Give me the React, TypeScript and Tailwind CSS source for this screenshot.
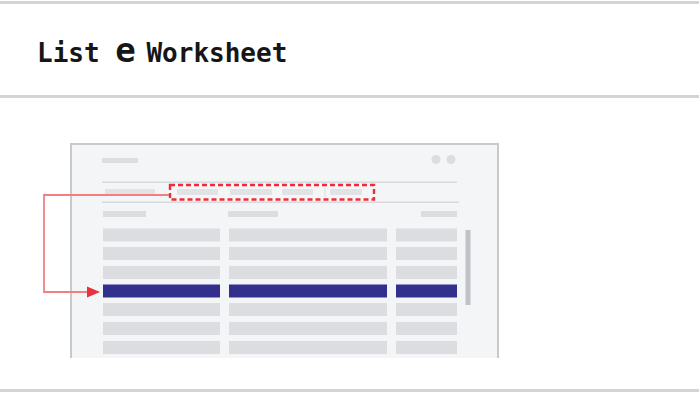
import React from "react";

const ROWS = [228.5, 247, 266, 284.5, 303, 322, 341];

function Illustration() {
  const gray = "#dcdde1";
  return (
    <svg
      width={460}
      height={216}
      viewBox="40 142 460 216"
      className="block"
      style={{ filter: "blur(0.35px)" }}
    >
      <rect x={71} y={144} width={427} height={240} fill="#f4f5f7" stroke="#c9c9cb" strokeWidth={2} />
      {/* title bar */}
      <rect x={102} y={158} width={36} height={5} fill={gray} />
      <circle cx={436} cy={159.5} r={4.5} fill={gray} />
      <circle cx={451} cy={159.5} r={4.5} fill={gray} />
      {/* tab lines */}
      <rect x={102} y={181.5} width={355} height={1.5} fill="#d8d9dc" />
      <rect x={102} y={201.5} width={357} height={1.5} fill="#d8d9dc" />
      {/* tabs */}
      <rect x={105} y={189} width={50} height={5} fill="#e2e3e6" />
      <rect x={177} y={189} width={41} height={6} fill="#e2e3e6" />
      <rect x={230} y={189} width={42} height={6} fill="#e2e3e6" />
      <rect x={282} y={189} width={31} height={6} fill="#e2e3e6" />
      <rect x={324.5} y={188} width={1} height={9} fill="#dcdde0" />
      <rect x={330} y={189} width={32} height={6} fill="#e2e3e6" />
      {/* dashed highlight */}
      <rect
        x={170}
        y={185}
        width={204}
        height={14.5}
        fill="none"
        stroke="#ea2f3a"
        strokeWidth={2.4}
        strokeDasharray="5 3"
      />
      {/* column headers */}
      <rect x={103} y={211} width={43} height={6} fill={gray} />
      <rect x={228} y={211} width={50} height={6} fill={gray} />
      <rect x={421} y={211} width={36} height={6} fill={gray} />
      {/* rows */}
      {ROWS.map((y, i) => {
        const c = i === 3 ? "#33308d" : gray;
        return (
          <g key={i}>
            <rect x={103} y={y} width={117} height={13} fill={c} />
            <rect x={229} y={y} width={158} height={13} fill={c} />
            <rect x={396} y={y} width={61} height={13} fill={c} />
          </g>
        );
      })}
      {/* scrollbar */}
      <rect x={465.5} y={230} width={5} height={75} fill="#bfc2c7" />
      {/* arrow */}
      <polyline
        points="169,195 44,195 44,292 90,292"
        fill="none"
        stroke="#f27f7f"
        strokeWidth={1.8}
      />
      <polygon points="87,286.5 100,292 87,297.5" fill="#e8323c" />
    </svg>
  );
}

export default function App() {
  return (
    <div className="w-[699px] h-[405px] bg-white pt-px">
      <div className="border-t-[3px] border-b-[3px] border-[#d4d4d4] h-[97px] flex items-center pl-[37px]">
        <h1
          className="text-[26px] font-bold text-[#161616] leading-none"
          style={{ fontFamily: '"DejaVu Sans Mono", "Liberation Mono", monospace' }}
        >
          List <span className="text-[34px] tracking-[-5px]">e</span> Worksheet
        </h1>
      </div>
      <div className="pt-[44px] pl-[40px] pb-[31px] border-b-[3px] border-[#d4d4d4]">
        <Illustration />
      </div>
    </div>
  );
}
